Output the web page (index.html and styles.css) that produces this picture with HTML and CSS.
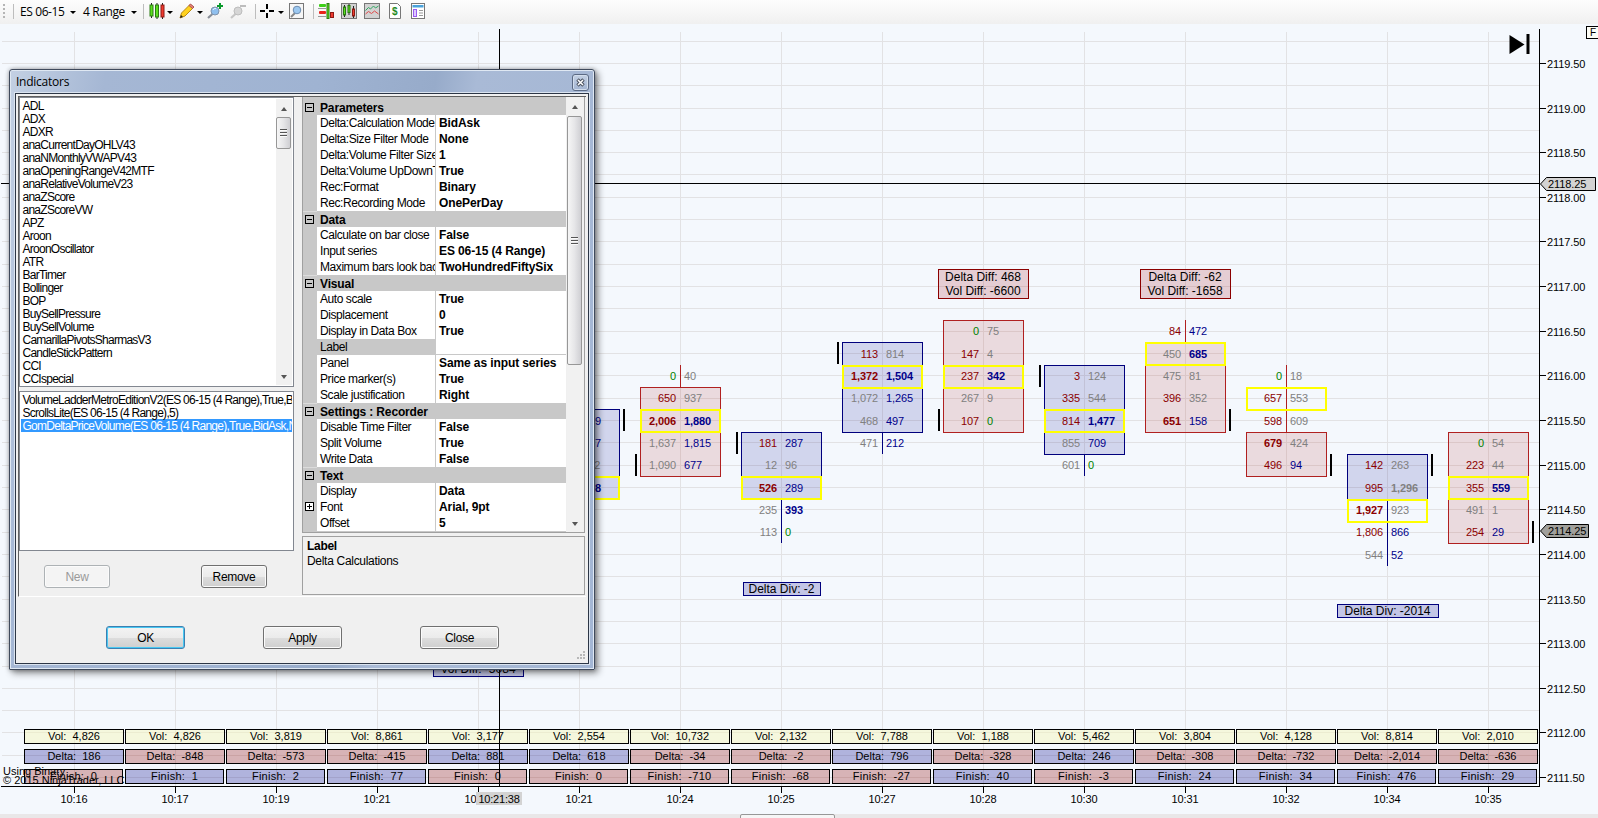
FILE: index.html
```html
<!DOCTYPE html>
<html lang="en">
<head>
  <meta charset="UTF-8" />
  <title>ES 06-15 (4 Range)</title>
  <link rel="stylesheet" href="styles.css">
</head>
<body>

<div class="toolbar">
  <span class="grip"></span>
  <span class="sep"></span>
  <span class="tool-text instrument">ES 06-15</span><span class="caret"></span>
  <span class="tool-text period">4 Range</span><span class="caret"></span>
  <span class="sep sep-2"></span>
  <svg class="icon" width="16" height="16" viewBox="0 0 16 16">
    <path d="M2.500 0v15M8 0v16M13.500 0v16" stroke="#222"/>
    <rect x="1" y="2" width="3" height="11" fill="#5be01e" stroke="#2b7a12"/>
    <rect x="6.500" y="2" width="3" height="12" fill="#5be01e" stroke="#2b7a12"/>
    <rect x="12" y="2" width="3" height="12" fill="#f03a2e" stroke="#8c1a14"/>
  </svg><span class="caret c1"></span>
  <svg class="icon pencil" width="16" height="16" viewBox="0 0 16 16">
    <path d="M1 15l1.500-5L11 1.500l3.500 3L6 13z" fill="#ffd21f" stroke="#b98a12"/>
    <path d="M10 2.500l1.500-1.500 3.500 3-1.500 1.500z" fill="#e8837a" stroke="#a55"/>
    <path d="M1 15l1-3 2 2z" fill="#222"/>
  </svg><span class="caret c1"></span>
  <svg class="icon zoom-in" width="18" height="16" viewBox="0 0 18 16">
    <path d="M1 15l5-4.500" stroke="#8a8f98" stroke-width="2.200"/>
    <circle cx="8" cy="8" r="4" fill="#8fbfee" stroke="#7f93ab"/>
    <path d="M6 7a2.500 2.500 0 0 1 3-1.500" fill="none" stroke="#e6f3ff"/>
    <path d="M13 0v6M10 3h6" stroke="#0a9a2c" stroke-width="2"/>
  </svg>
  <svg class="icon zoom-out" width="18" height="16" viewBox="0 0 18 16">
    <path d="M1 15l5-4.500" stroke="#c6c6c6" stroke-width="2.200"/>
    <circle cx="8" cy="8" r="4" fill="#d6d6d6" stroke="#bdbdbd"/>
    <path d="M10 3h6" stroke="#bdbdbd" stroke-width="2"/>
  </svg>
  <span class="sep sep-3"></span>
  <svg class="icon cross" width="16" height="16" viewBox="0 0 16 16">
    <path d="M7 1v5M7 10v5M0 8h5M9 8h5" stroke="#000" stroke-width="2"/>
  </svg><span class="caret c2"></span>
  <svg class="icon data-box" width="16" height="16" viewBox="0 0 16 16">
    <rect x=".5" y=".5" width="14" height="15" fill="#f6f6f6" stroke="#777"/>
    <path d="M2 14l4-4" stroke="#888" stroke-width="2"/>
    <circle cx="8" cy="7" r="3.800" fill="#9cc8f0" stroke="#6c8cb0"/>
  </svg>
  <span class="sep sep-4"></span>
  <svg class="icon trader" width="16" height="16" viewBox="0 0 16 16">
    <path d="M0 5.500h8M0 13.500h8" stroke="#999"/>
    <rect x="1" y="1" width="7" height="3" rx="1" fill="#3fcf1a"/>
    <rect x="1" y="8" width="7" height="3" rx="1" fill="#e8231c"/>
    <path d="M10 0v16" stroke="#2b7a12" stroke-width="3"/><path d="M10 1v14" stroke="#5be01e"/>
    <rect x="12.500" y="9.500" width="3" height="5" fill="#f03a2e" stroke="#8c1a14"/>
  </svg>
  <svg class="icon" width="16" height="16" viewBox="0 0 16 16">
    <rect x=".5" y=".5" width="15" height="15" fill="#d2d2d2" stroke="#777"/>
    <path d="M3.500 2v12M8 1v11M12.500 3v12" stroke="#222"/>
    <rect x="2.500" y="4" width="2" height="8" fill="#5be01e" stroke="#2b7a12"/>
    <rect x="7" y="2.500" width="2" height="7" fill="#5be01e" stroke="#2b7a12"/>
    <rect x="11.500" y="6" width="2" height="7" fill="#f03a2e" stroke="#8c1a14"/>
  </svg>
  <svg class="icon" width="16" height="16" viewBox="0 0 16 16">
    <rect x=".5" y=".5" width="15" height="15" fill="#d2d2d2" stroke="#777"/>
    <path d="M1.500 7.500l3-3 2 1.500 3-3 2 2 3-2" fill="none" stroke="#2fa862"/>
    <path d="M1.500 11l3-2.500 3 2 3-2.500 4 3" fill="none" stroke="#e04a4a"/>
  </svg>
  <svg class="icon" width="16" height="16" viewBox="0 0 16 16">
    <path d="M2.500.5h8l3 3v12h-11z" fill="#fff" stroke="#777"/>
    <text x="5" y="12" class="dollar">$</text>
  </svg>
  <svg class="icon" width="16" height="16" viewBox="0 0 16 16">
    <rect x="1.500" y=".5" width="13" height="15" fill="#fff" stroke="#777"/>
    <rect x="2.500" y="2" width="11" height="2.500" fill="#4aa3dc"/>
    <rect x="3.500" y="6.500" width="3" height="7" fill="#ddc8ff" stroke="#9a5cf0"/>
    <path d="M9 7.500h4M9 10h4M9 12.500h4" stroke="#999"/>
  </svg>
</div>

<div class="chart">
  <svg id="plot" class="plot" width="1598" height="790" viewBox="0 24 1598 790"></svg>
  <div id="stats" class="stats"></div>
  <div class="crosshair-v"></div>
  <div class="time-marker">10:21:38</div>
  <div class="credits">Using Binary<br>© 2015 NinjaTrader, LLC</div>
  <div class="fixed-btn">F</div>
</div>
<div class="scroll-strip"><span class="scroll-thumb"></span></div>

<div class="dialog">
  <div class="titlebar">
    <span>Indicators</span>
    <button class="close-x"><svg width="9" height="9" viewBox="0 0 9 9"><path d="M1.500 1.500l6 6M7.500 1.500l-6 6" stroke="#4a5260" stroke-width="3.400"/><path d="M2 2l5 5M7 2l-5 5" stroke="#fff" stroke-width="1.500"/></svg></button>
  </div>
  <div class="client">
    <div class="panes">
      <div class="left">
        <div class="listbox available">
          <ul>
            <li>ADL</li>
            <li>ADX</li>
            <li>ADXR</li>
            <li>anaCurrentDayOHLV43</li>
            <li>anaNMonthlyVWAPV43</li>
            <li>anaOpeningRangeV42MTF</li>
            <li>anaRelativeVolumeV23</li>
            <li>anaZScore</li>
            <li>anaZScoreVW</li>
            <li>APZ</li>
            <li>Aroon</li>
            <li>AroonOscillator</li>
            <li>ATR</li>
            <li>BarTimer</li>
            <li>Bollinger</li>
            <li>BOP</li>
            <li>BuySellPressure</li>
            <li>BuySellVolume</li>
            <li>CamarillaPivotsSharmasV3</li>
            <li>CandleStickPattern</li>
            <li>CCI</li>
            <li>CCIspecial</li>
          </ul>
          <div class="scrollbar"><i class="up"></i><b class="thumb"></b><i class="down"></i></div>
        </div>
        <div class="listbox selected">
          <ul>
            <li>VolumeLadderMetroEditionV2(ES 06-15 (4 Range),True,Blue)</li>
            <li>ScrollsLite(ES 06-15 (4 Range),5)</li>
            <li class="active">GomDeltaPriceVolume(ES 06-15 (4 Range),True,BidAsk,None)</li>
          </ul>
        </div>
        <div class="list-actions">
          <button class="btn small" disabled>New</button>
          <button class="btn small">Remove</button>
        </div>
      </div>
      <div class="right">
        <div class="propgrid">
          <div id="props" class="props"></div>
          <div class="scrollbar"><i class="up"></i><b class="thumb"></b><i class="down"></i></div>
        </div>
        <div class="description"><b>Label</b><br>Delta Calculations</div>
      </div>
    </div>
    <div class="footer">
      <button class="btn default">OK</button>
      <button class="btn">Apply</button>
      <button class="btn">Close</button>
    </div>
    <svg class="size-grip" width="10" height="10" viewBox="0 0 10 10"><path d="M7 1h2M4 4h2M7 4h2M1 7h2M4 7h2M7 7h2" stroke="#b8b8b8" stroke-width="2"/></svg>
  </div>
</div>

<script src="chart.js"></script>
</body>
</html>
```
FILE: styles.css
```css
* {
  box-sizing: border-box;
}

body {
  margin: 0;
  width: 1598px;
  height: 818px;
  overflow: hidden;
  position: relative;
  font-family: "Liberation Sans", Arial, sans-serif;
  font-size: 11px;
  color: #000;
  background: #e9e7e8;
}

/* toolbar */
.toolbar {
  display: flex;
  align-items: center;
  height: 24px;
  padding-bottom: 2px;
  background: linear-gradient(#fdfdfd, #f0f0f0);
  font-family: "Open Sans", sans-serif;
  font-size: 12px;
}

.grip {
  width: 2px;
  height: 15px;
  margin-left: 3px;
  background: repeating-linear-gradient(#b5b5b5 0 2px, transparent 2px 4px);
}

.sep {
  width: 1px;
  height: 15px;
  margin-left: 8px;
  background: #bdbdbd;
}

.tool-text {
  white-space: nowrap;
  letter-spacing: -0.4px;
}

.instrument {
  width: 50px;
  margin-left: 6px;
}

.period {
  width: 48px;
  margin-left: 7px;
}

.caret {
  border: 3px solid transparent;
  border-top-color: #000;
  border-bottom: 0;
  margin-top: 2px;
}

.sep-2 { margin-left: 6px; }
.sep-3 { margin-left: 7px; }
.sep-4 { margin-left: 8px; }

.icon {
  flex: none;
  margin-left: 7px;
}

.sep-2 + .icon { margin-left: 5px; }
.caret.c1 { margin-left: 2px; }
.pencil { margin-left: 6px; }
.zoom-in { margin-left: 4px; }
.zoom-out { margin-left: 5px; }
.cross { margin-left: 4px; }
.caret.c2 { margin-left: 2px; }
.data-box { margin-left: 5px; }
.trader { margin-left: 4px; }

.dollar {
  font: bold 10px "Liberation Sans", sans-serif;
  fill: #1f8a1f;
}

/* chart */
.chart {
  position: relative;
  height: 790px;
  background: #f4f8fd;
}

.plot {
  display: block;
}

.plot text {
  font-size: 11px;
  letter-spacing: -0.1px;
}

.plot .note {
  font-size: 12px;
  letter-spacing: 0;
}

.grid { stroke: #e2e2e4; }
.axis { stroke: #000; }

.box-up { fill: rgba(0, 0, 139, 0.14); stroke: #00007d; }
.box-down { fill: rgba(178, 34, 34, 0.14); stroke: #b02020; }
.wick-up { stroke: #00007d; }
.wick-down { stroke: #b02020; }
.poc { fill: none; stroke: #ffff00; stroke-width: 2; }
.note-up { fill: rgba(0, 0, 139, 0.2); stroke: #00007d; }
.note-down { fill: rgba(165, 20, 30, 0.19); stroke: #8b0000; }

.n { fill: #00008b; }
.r { fill: #8b0000; }
.g { fill: #808080; }
.z { fill: #008000; }
.bold { font-weight: bold; }

.stats {
  position: absolute;
  left: 24px;
  top: 705px;
  display: grid;
  grid-template-columns: repeat(15, 100px);
  column-gap: 1px;
  row-gap: 5px;
}

.stat {
  height: 15px;
  border: 1px solid #000;
  line-height: 12px;
  text-align: center;
  white-space: pre;
}

.stat.vol { background: rgba(245, 245, 190, 0.5); }
.stat.up { background: rgba(0, 0, 139, 0.28); }
.stat.down { background: rgba(139, 0, 0, 0.28); }

.stat.finish {
  width: 99px;
  letter-spacing: 0.25px;
}

.crosshair-v {
  position: absolute;
  left: 499px;
  top: 5px;
  width: 1px;
  height: 757px;
  background: #000;
}

.time-marker {
  position: absolute;
  left: 476px;
  top: 768px;
  width: 46px;
  height: 13px;
  background: #d3d3d3;
  text-align: center;
  line-height: 14px;
  letter-spacing: -0.2px;
}

.credits {
  position: absolute;
  left: 3px;
  top: 743px;
  line-height: 9px;
}

.fixed-btn {
  position: absolute;
  left: 1586px;
  top: 2px;
  width: 14px;
  height: 13px;
  border: 1px solid #000;
  background: #fdfdf6;
  padding-left: 3px;
  font-size: 10px;
  line-height: 12px;
}

.scroll-strip {
  height: 4px;
  padding-left: 740px;
  background: #e9e7e8;
}

.scroll-thumb {
  display: block;
  width: 95px;
  height: 8px;
  border: 1px solid #979797;
  border-radius: 2px;
  background: #f6f6f6;
}

/* dialog */
.dialog {
  position: absolute;
  left: 9px;
  top: 69px;
  width: 586px;
  height: 601px;
  padding: 0 5px 5px;
  border: 1px solid #3f4a5c;
  border-radius: 3px 3px 1px 1px;
  background: linear-gradient(100deg, #c3d0e3 0, #a5b7d4 14%, #9fb3d2 45%, #97abca 62%, #a9bad6 68%, #a3b6d4 100%);
  box-shadow: inset 0 0 0 1px #dfe8f3, 3px 3px 7px rgba(0, 0, 0, 0.45), 0 0 4px rgba(0, 0, 0, 0.3);
  font-size: 12px;
}

.titlebar {
  display: flex;
  justify-content: space-between;
  height: 23px;
  padding: 4px 0 0 1px;
  font: 12px/16px "Open Sans", sans-serif;
  letter-spacing: -0.25px;
}

.close-x {
  width: 17px;
  height: 17px;
  padding: 0;
  border: 1px solid #5b6a84;
  border-radius: 3px;
  background: linear-gradient(#c3d0e3, #a3b5d2);
  box-shadow: inset 0 0 0 1px #d3deed;
  line-height: 0;
}

.client {
  position: relative;
  height: 571px;
  border: 1px solid #2c3646;
  background: #f0f0f0;
  box-shadow: 0 0 0 1px #dbe4f0;
}

.panes {
  display: flex;
  height: 501px;
  margin: 2px 2px 0;
  border-top: 1px solid #606060;
  border-left: 1px solid #606060;
  border-bottom: 1px solid #fff;
}

.left {
  width: 275px;
}

.right {
  width: 283px;
  margin-left: 8px;
}

.listbox {
  display: flex;
  border: 1px solid #828790;
  background: #fff;
}

.available {
  height: 290px;
  padding: 1px;
}

.selected {
  height: 160px;
  margin-top: 4px;
  padding: 1px;
}

.listbox ul {
  flex: 1;
  min-width: 0;
  margin: 0;
  padding: 0;
  overflow: hidden;
  list-style: none;
  letter-spacing: -0.74px;
}

.listbox li {
  height: 13px;
  padding-left: 1.5px;
  line-height: 14px;
  white-space: nowrap;
}

.listbox li.active {
  background: #3399ff;
  color: #fff;
}

.scrollbar {
  display: flex;
  flex-direction: column;
  width: 16px;
  background: #f1f1f1;
}

.scrollbar .up,
.scrollbar .down {
  margin: 8px auto 6px;
  border: 3px solid transparent;
}

.scrollbar .up {
  border-top: 0;
  border-bottom: 4px solid #555;
}

.scrollbar .down {
  margin: auto auto 6px;
  border-bottom: 0;
  border-top: 4px solid #555;
}

.thumb {
  display: flex;
  width: 15px;
  height: 32px;
  border: 1px solid #979797;
  border-radius: 2px;
  background: linear-gradient(90deg, #f6f6f6, #e6e6e8 50%, #cfcfd3);
}

.thumb::after {
  content: "";
  width: 7px;
  height: 8px;
  margin: auto;
  background: repeating-linear-gradient(#555 0 1px, #fafafa 1px 2px, transparent 2px 3px);
}

.list-actions {
  display: flex;
  justify-content: space-between;
  padding: 14px 27px 0 25px;
}

.btn {
  width: 79px;
  height: 23px;
  padding: 0;
  border: 1px solid #707070;
  border-radius: 3px;
  background: linear-gradient(#f3f3f3, #ebebeb 50%, #dddddd 51%, #cfcfcf);
  box-shadow: inset 0 0 0 1px #fbfbfb;
  font: 12px "Liberation Sans", Arial, sans-serif;
  letter-spacing: -0.3px;
  color: #000;
}

.btn.small {
  width: 66px;
}

.btn:disabled {
  border-color: #adb2b5;
  background: #f4f4f4;
  color: #9a9a9a;
}

.btn.default {
  border-color: #3c7fb1;
  box-shadow: inset 0 0 0 1px #48c8f2;
}

.propgrid {
  display: flex;
  height: 436px;
  padding: 0 1px 0 0;
  border: 1px solid #a0a0a0;
  border-top: 0;
  background: #f0f0f0;
}

.props {
  flex: 1;
  min-width: 0;
  padding-top: 2px;
  overflow: hidden;
  background: #c8c8c8;
}

.group,
.prop {
  display: grid;
  grid-template-columns: 14px 119px 1fr;
  height: 16px;
  line-height: 16px;
  white-space: nowrap;
}

.group {
  grid-template-columns: 14px 1fr;
  border-top: 1px solid #dcdcdc;
  font-weight: bold;
}

.group:first-child {
  border-top-color: #c8c8c8;
}

.prop .name {
  padding-left: 3px;
  overflow: hidden;
  border-right: 1px solid #c8c8c8;
  border-bottom: 1px solid #c8c8c8;
  background: #fff;
  letter-spacing: -0.43px;
}

.prop .value {
  padding-left: 3px;
  border-bottom: 1px solid #c8c8c8;
  background: #fff;
  font-weight: bold;
  letter-spacing: -0.1px;
}

.prop.current .name {
  background: #c8c8c8;
}

.group .name {
  padding-left: 3px;
  letter-spacing: -0.15px;
}

.expander {
  width: 9px;
  height: 9px;
  margin: 3px 0 0 2px;
  border: 1px solid #000;
  background: linear-gradient(#000, #000) center / 5px 1px no-repeat;
}

.expander.plus {
  background: linear-gradient(#000, #000) center / 5px 1px no-repeat,
    linear-gradient(#000, #000) center / 1px 5px no-repeat, #fff;
}

.propgrid .scrollbar {
  margin-left: 1px;
}

.propgrid .thumb {
  height: 249px;
}

.propgrid .scrollbar .up {
  margin: 8px auto 7px;
}

.description {
  height: 59px;
  margin-top: 3px;
  padding: 2px 4px;
  border: 1px solid #a0a0a0;
  line-height: 15px;
  letter-spacing: -0.3px;
}

.footer {
  display: flex;
  gap: 78px;
  padding: 29px 0 0 90px;
}

.size-grip {
  position: absolute;
  right: 2px;
  bottom: 2px;
}
```
FILE: chart.js
```js
const STEP = 22.32;
const rowY = i => 63.37 + STEP * i;
const edgeY = i => Math.round(rowY(i) - STEP / 2);
const px = v => Math.floor(v) + 0.5;
const centers = Array.from({ length: 15 }, (_, i) => 74 + 101 * i);

const times = ["10:16", "10:17", "10:19", "10:21", "10:21", "10:21", "10:24", "10:25", "10:27", "10:28", "10:30", "10:31", "10:32", "10:34", "10:35"];
const vols = ["4,826", "4,826", "3,819", "8,861", "3,177", "2,554", "10,732", "2,132", "7,788", "1,188", "5,462", "3,804", "4,128", "8,814", "2,010"];
const deltas = ["186", "-848", "-573", "-415", "881", "618", "-34", "-2", "796", "-328", "246", "-308", "-732", "-2,014", "-636"];
const finishes = ["0", "1", "2", "77", "0", "0", "-710", "-68", "-27", "40", "-3", "24", "34", "476", "29"];

// row: first price row, box: first/last row of the body, wick: rows of the thin line
// cells: bid, colour, ask, colour (capital letter = bold)
const bars = [
  { x: 579, dir: "up", row: 16, box: [16, 19], poc: 19, mark: [16, 1],
    cells: [["", "r", "319", "n"], ["", "r", "407", "n"], ["", "g", "112", "g"], ["", "r", "608", "N"]] },
  { x: 680, dir: "down", row: 14, box: [15, 18], wick: [14, 14], poc: 16, mark: [18, -1],
    cells: [["0", "z", "40", "g"], ["650", "r", "937", "g"], ["2,006", "R", "1,880", "N"], ["1,637", "g", "1,815", "n"], ["1,090", "g", "677", "n"]] },
  { x: 781, dir: "up", row: 17, box: [17, 19], wick: [20, 21], poc: 19, mark: [17, -1],
    cells: [["181", "r", "287", "n"], ["12", "g", "96", "g"], ["526", "R", "289", "n"], ["235", "g", "393", "N"], ["113", "g", "0", "z"]] },
  { x: 882, dir: "up", row: 13, box: [13, 16], wick: [17, 17], poc: 14, mark: [13, -1],
    cells: [["113", "r", "814", "g"], ["1,372", "R", "1,504", "N"], ["1,072", "g", "1,265", "n"], ["468", "g", "497", "n"], ["471", "g", "212", "n"]] },
  { x: 983, dir: "down", row: 12, box: [12, 16], poc: 14, mark: [16, -1],
    cells: [["0", "z", "75", "g"], ["147", "r", "4", "g"], ["237", "r", "342", "N"], ["267", "g", "9", "g"], ["107", "r", "0", "z"]] },
  { x: 1084, dir: "up", row: 14, box: [14, 17], wick: [18, 18], poc: 16, mark: [14, -1],
    cells: [["3", "r", "124", "g"], ["335", "r", "544", "g"], ["814", "r", "1,477", "N"], ["855", "g", "709", "n"], ["601", "g", "0", "z"]] },
  { x: 1185, dir: "down", row: 12, box: [13, 16], wick: [12, 12], poc: 13, mark: [16, 1],
    cells: [["84", "r", "472", "n"], ["450", "g", "685", "N"], ["475", "g", "81", "g"], ["396", "r", "352", "g"], ["651", "R", "158", "n"]] },
  { x: 1286, dir: "down", row: 14, box: [17, 18], wick: [14, 16], poc: 15, mark: [18, 1],
    cells: [["0", "z", "18", "g"], ["657", "r", "553", "g"], ["598", "r", "609", "g"], ["679", "R", "424", "g"], ["496", "r", "94", "n"]] },
  { x: 1387, dir: "up", row: 18, box: [18, 19], wick: [20, 22], poc: 20, mark: [18, 1],
    cells: [["142", "r", "263", "g"], ["995", "r", "1,296", "G"], ["1,927", "R", "923", "g"], ["1,806", "r", "866", "n"], ["544", "g", "52", "n"]] },
  { x: 1488, dir: "down", row: 17, box: [17, 21], poc: 19, mark: [21, 1],
    cells: [["0", "z", "54", "g"], ["223", "r", "44", "g"], ["355", "r", "559", "N"], ["491", "g", "1", "g"], ["254", "r", "29", "n"]] }
];

const notes = [
  { x: 433, y: 647, w: 90, dir: "up", lines: ["Delta Diff: 904", "Vol Diff: -5084"] },
  { x: 743, y: 582, w: 77, dir: "up", lines: ["Delta Div: -2"] },
  { x: 938, y: 269, w: 90, dir: "down", lines: ["Delta Diff: 468", "Vol Diff: -6600"] },
  { x: 1140, y: 269, w: 90, dir: "down", lines: ["Delta Diff: -62", "Vol Diff: -1658"] },
  { x: 1337, y: 604, w: 101, dir: "up", lines: ["Delta Div: -2014"] }
];

const line = (x1, y1, x2, y2, cls) => `<line x1="${x1}" y1="${y1}" x2="${x2}" y2="${y2}" class="${cls}"/>`;
const rect = (x, y, w, h, cls) => `<rect x="${x}" y="${y}" width="${w}" height="${h}" class="${cls}"/>`;
const text = (x, y, s, cls, anchor = "start") => `<text x="${x}" y="${y}" class="${cls}" text-anchor="${anchor}">${s}</text>`;

let out = "";

// grid
for (let i = -1; i <= 32; i++) out += line(2, px(rowY(i)), 1539, px(rowY(i)), "grid");
centers.forEach(x => out += line(x + 0.5, 32, x + 0.5, 786, "grid"));

// bars
bars.forEach(b => {
  const [first, last] = b.box;
  if (b.wick) out += line(b.x + 0.5, edgeY(b.wick[0]), b.x + 0.5, edgeY(b.wick[1] + 1), "wick-" + b.dir);
  out += rect(b.x - 39.5, edgeY(first) + 0.5, 80, edgeY(last + 1) - edgeY(first), "box-" + b.dir);
  out += rect(b.x - 39, edgeY(b.poc) + 1, 79, 22, "poc");
  out += rect(b.x + (b.mark[1] < 0 ? -45 : 44), edgeY(b.mark[0]), 2, 22, "");
  b.cells.forEach(([bid, bc, ask, ac], k) => {
    const y = Math.round(rowY(b.row + k) + 0.23) + 4;
    const cls = c => c.toLowerCase() + (c < "a" ? " bold" : "");
    out += text(b.x - 4, y, bid, cls(bc), "end") + text(b.x + 4, y, ask, cls(ac));
  });
});

notes.forEach(n => {
  const two = n.lines.length === 2;
  out += rect(n.x + 0.5, n.y + 0.5, n.w, two ? 29 : 13, "note-" + n.dir);
  n.lines.forEach((s, k) => out += text(n.x + n.w / 2, n.y + (two ? 12 : 11) + 14 * k, s, "note", "middle"));
});

// axes
out += line(1539.5, 29, 1539.5, 787, "axis") + line(1, 786.5, 1540, 786.5, "axis");
for (let i = 0; i <= 32; i += 2) {
  const y = px(rowY(i));
  out += line(1540, y, 1546, y, "axis") + text(1547, y + 4.5, (2119.5 - i / 4).toFixed(2), "");
}
centers.forEach((x, i) => {
  out += line(x + 0.5, 787, x + 0.5, 793, "axis") + text(x, 803, times[i], "", "middle");
});

// crosshair and price markers
out += line(1, 183.5, 1540, 183.5, "axis");
out += `<path d="M1540.5 184l6-6.500h49v13h-49z" fill="#d3d3d3" stroke="#000"/>` + text(1548, 188, "2118.25", "");
out += `<path d="M1540.5 531l6-6.500h42v13h-42z" fill="#a0a09c" stroke="#000"/>` + text(1548, 535, "2114.25", "");
out += `<path d="M1509.500 35v19l15-9.500z"/><rect x="1526.500" y="34" width="3" height="20"/>`;

document.getElementById("plot").innerHTML = out;

const stat = (label, v, cls) => `<div class="stat ${cls}">${label}:  ${v}</div>`;
const downFinish = [0, 4, 5, 6, 7, 8, 10];
document.getElementById("stats").innerHTML =
  vols.map(v => stat("Vol", v, "vol")).join("") +
  deltas.map(v => stat("Delta", v, v[0] === "-" ? "down" : "up")).join("") +
  finishes.map((v, i) => stat("Finish", v, "finish " + (downFinish.includes(i) ? "down" : "up"))).join("");

// property grid
const props = [
  ["Parameters"],
  ["Delta:Calculation Mode", "BidAsk"],
  ["Delta:Size Filter Mode", "None"],
  ["Delta:Volume Filter Size", "1"],
  ["Delta:Volume UpDownTick", "True"],
  ["Rec:Format", "Binary"],
  ["Rec:Recording Mode", "OnePerDay"],
  ["Data"],
  ["Calculate on bar close", "False"],
  ["Input series", "ES 06-15 (4 Range)"],
  ["Maximum bars look back", "TwoHundredFiftySix"],
  ["Visual"],
  ["Auto scale", "True"],
  ["Displacement", "0"],
  ["Display in Data Box", "True"],
  ["Label", ""],
  ["Panel", "Same as input series"],
  ["Price marker(s)", "True"],
  ["Scale justification", "Right"],
  ["Settings : Recorder"],
  ["Disable Time Filter", "False"],
  ["Split Volume", "True"],
  ["Write Data", "False"],
  ["Text"],
  ["Display", "Data"],
  ["Font", "Arial, 9pt"],
  ["Offset", "5"]
];
document.getElementById("props").innerHTML = props.map(([name, value]) => {
  if (value === undefined) return `<div class="group"><span class="expander"></span><span class="name">${name}</span></div>`;
  const mark = name === "Font" ? `<span class="expander plus"></span>` : "<span></span>";
  return `<div class="prop${name === "Label" ? " current" : ""}">${mark}<span class="name">${name}</span><span class="value">${value}</span></div>`;
}).join("");
```
